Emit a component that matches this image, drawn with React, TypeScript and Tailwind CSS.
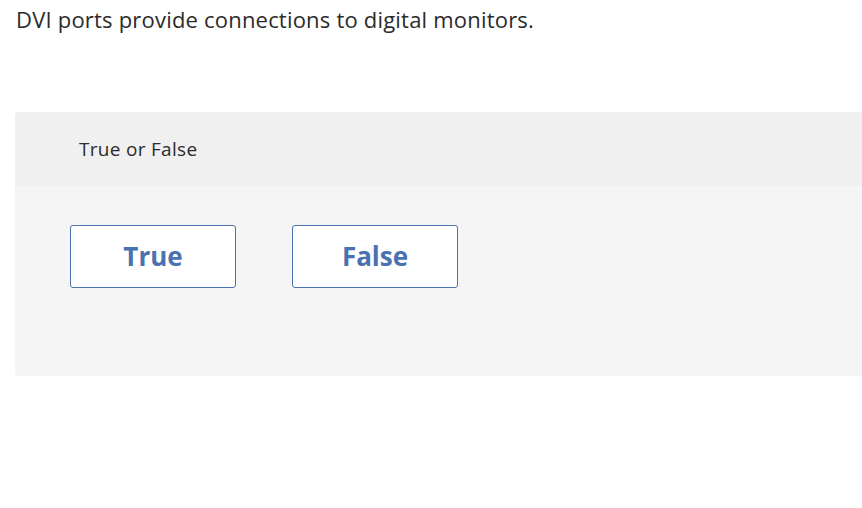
export default function App() {
  return (
    <div className="min-h-[508px] bg-white font-['Open_Sans',sans-serif] text-[#222]">
      <p className="pl-[16px] pt-[5px] text-[22px] leading-[28px] tracking-[0.2px] text-[#2b2b2b]">
        DVI ports provide connections to digital monitors.
      </p>
      <div className="mt-[79px] pl-[15px]">
        <div className="overflow-hidden rounded-l-[4px] bg-[#f5f5f5]">
          <div className="flex h-[74px] items-center bg-[#f0f0f0] pl-[64px]">
            <span className="text-[19px] tracking-[0.3px] text-[#2b2b2b]">True or False</span>
          </div>
          <div className="flex h-[190px] items-start gap-[56px] pl-[55px] pt-[39px]">
            <button className="flex h-[63px] w-[166px] items-center justify-center rounded-[3px] border border-[#4a72b0] bg-white text-[26px] font-bold text-[#4a72b0]">
              True
            </button>
            <button className="flex h-[63px] w-[166px] items-center justify-center rounded-[3px] border border-[#4a72b0] bg-white text-[26px] font-bold text-[#4a72b0]">
              False
            </button>
          </div>
        </div>
      </div>
    </div>
  );
}
